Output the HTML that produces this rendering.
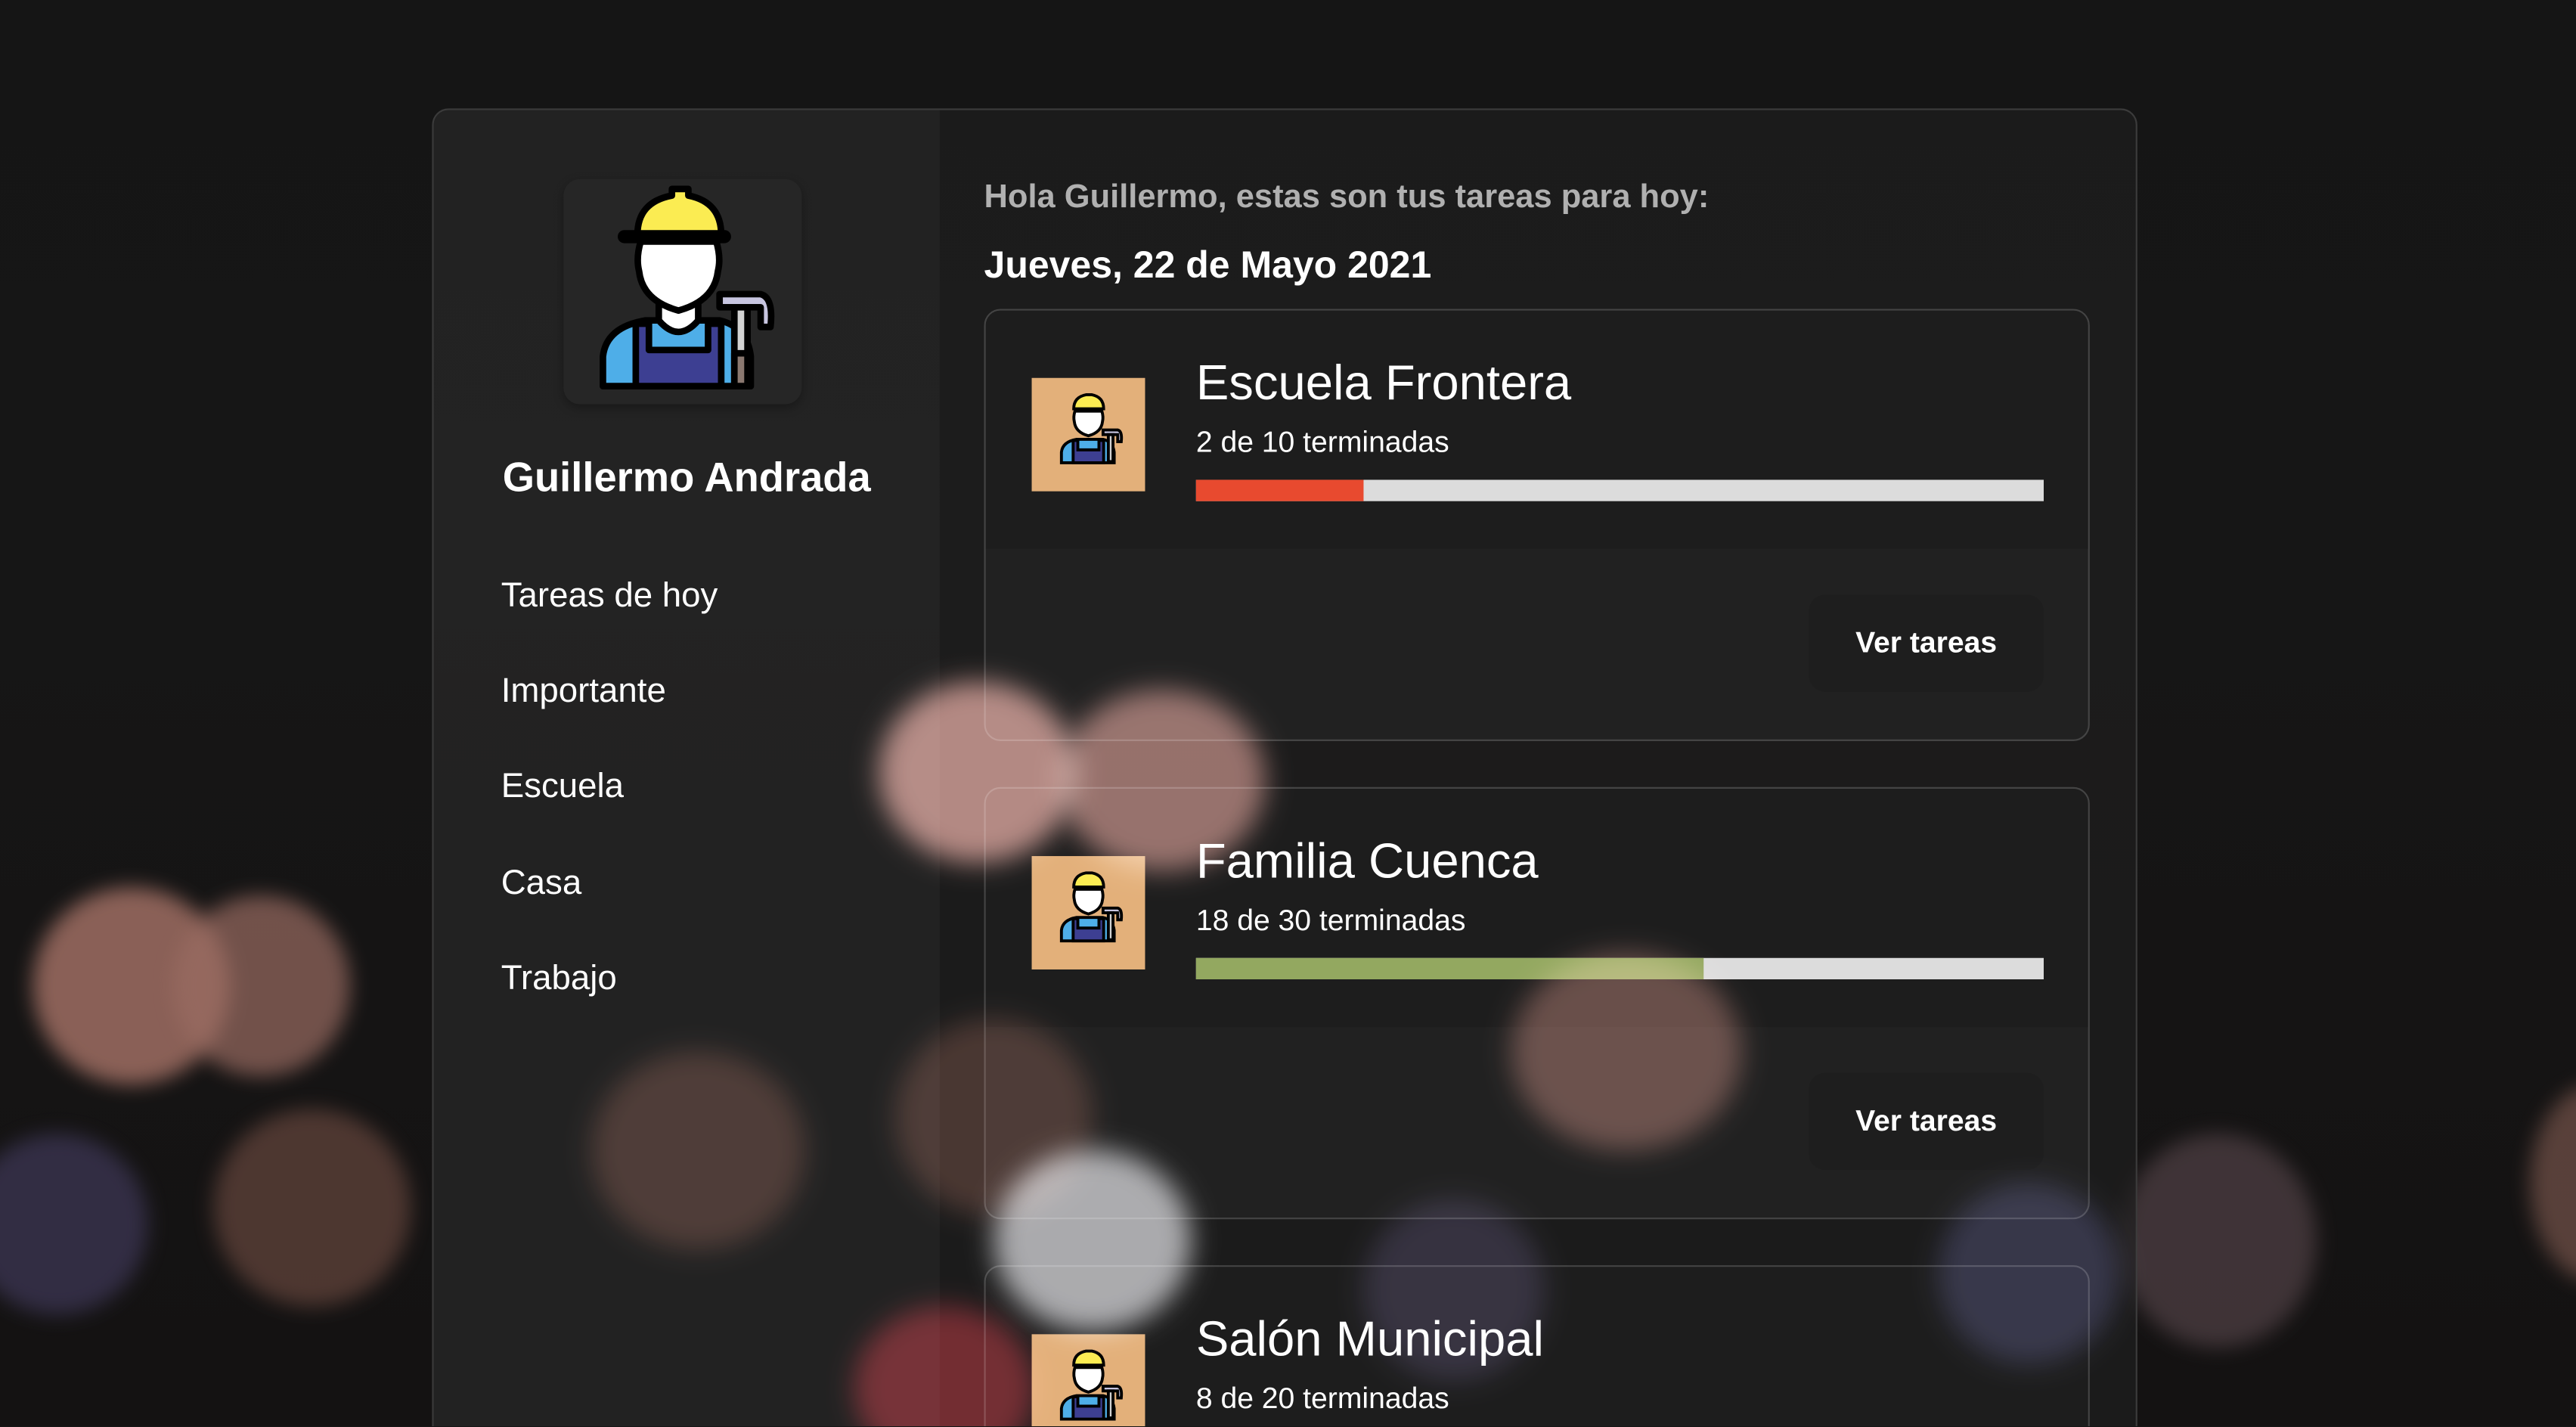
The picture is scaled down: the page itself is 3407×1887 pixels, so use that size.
<!DOCTYPE html>
<html><head><meta charset="utf-8"><style>
html,body{margin:0;padding:0;background:#161616;overflow:hidden;width:3407px;height:1887px;font-family:"Liberation Sans",sans-serif;}
#w{position:absolute;left:0;top:0;width:1568px;height:868px;transform:scale(2.17283);transform-origin:0 0;overflow:hidden;background:linear-gradient(#151515,#161616 40%,#141212);}
.b{position:absolute;border-radius:50%;filter:blur(6px);}
.s{position:absolute;border-radius:50%;filter:blur(8px);mix-blend-mode:screen;pointer-events:none;}
.panel{position:absolute;left:263px;top:66px;width:1036px;height:810px;border:1px solid #3b3b3b;border-radius:10px;overflow:hidden;background:rgba(30,30,30,0.72);}
.side{position:absolute;left:0;top:0;width:308px;height:100%;background:rgba(38,38,38,0.75);}
.av{position:absolute;left:79px;top:42px;width:145px;height:137px;background:#262626;border-radius:10px;box-shadow:0 2px 6px rgba(0,0,0,.3);}
.name{position:absolute;left:0;width:308px;top:210px;text-align:center;color:#fff;font-weight:bold;font-size:25px;}
.nav{position:absolute;left:41px;color:#fff;font-size:21px;}
.t{position:absolute;color:#fff;}
.card{position:absolute;left:335px;width:671px;height:261px;border:1px solid #444;border-radius:10px;overflow:hidden;background:rgba(36,36,36,.72);}
.top{position:absolute;left:0;top:0;width:100%;height:145px;background:rgba(30,30,30,.95);}
.ic{position:absolute;left:28px;top:41px;width:69px;height:69px;background:#e3b07a;}
.ti{position:absolute;left:128px;top:28px;font-size:30px;color:#fff;}
.su{position:absolute;left:128px;top:70px;font-size:18px;color:#fff;}
.bar{position:absolute;left:128px;top:103px;width:516px;height:13px;background:#dcdcdc;}
.bar i{display:block;height:100%;}
.btn{position:absolute;left:501px;top:173px;width:143px;height:59px;background:#1e1e1e;border-radius:10px;color:#fff;font-weight:bold;font-size:18px;text-align:center;line-height:59px;}
</style></head><body><div id="w">
<div class="b" style="left:20px;top:540px;width:120px;height:120px;background:#a87468;opacity:.8"></div>
<div class="b" style="left:105px;top:545px;width:108px;height:110px;background:#9a6c62;opacity:.7"></div>
<div class="b" style="left:-20px;top:690px;width:110px;height:110px;background:#3a3450;opacity:.8"></div>
<div class="b" style="left:130px;top:675px;width:120px;height:120px;background:#5c4038;opacity:.8"></div>
<div class="b" style="left:1290px;top:690px;width:120px;height:130px;background:#4a3c40;opacity:.8"></div>
<div class="b" style="left:1540px;top:660px;width:80px;height:120px;background:#6a4c44;opacity:.8"></div>
<div class="panel">
 <div class="side">
  <div class="av"><svg width="145" height="137" viewBox="0 0 145 137">
   <g stroke="#000" stroke-width="4" stroke-linejoin="round">
    <path d="M24 126 L24 108 Q26 90 50 86 L95 86 Q112 90 114 108 L114 126 Z" fill="#4eaee8"/>
    <path d="M44 88 L44 126 L96 126 L96 88 L88 88 L88 104 L52 104 L52 88 Z" fill="#3d3f92"/>
    <path d="M58 72 L58 86 Q70 100 82 86 L82 72 Z" fill="#fff"/>
    <path d="M47 38 Q44 48 46 56 Q48 74 70 80 Q92 74 94 56 Q96 48 93 38 Z" fill="#fff"/>
    <path d="M45 34 Q45 14 66 10 L66 6 L76 6 L76 10 Q96 14 96 34 Z" fill="#fbec52"/>
    <rect x="35" y="33" width="65" height="4" rx="2" fill="#000"/>
    <path d="M95 70 L120 70 Q128 72 126 90 L120 90 L120 78 L95 78 Z" fill="#c7c5e0"/>
    <rect x="104" y="78" width="8" height="46" fill="#d2d2d2"/>
    <rect x="104" y="106" width="8" height="20" fill="#8a7870"/>
   </g></svg></div>
  <div class="name">Guillermo Andrada</div>
  <div class="nav" style="top:284px">Tareas de hoy</div>
  <div class="nav" style="top:342px">Importante</div>
  <div class="nav" style="top:400px">Escuela</div>
  <div class="nav" style="top:459px">Casa</div>
  <div class="nav" style="top:517px">Trabajo</div>
 </div>
 <div class="t" style="left:335px;top:42px;font-size:20px;font-weight:bold;color:#b0b0b0">Hola Guillermo, estas son tus tareas para hoy:</div>
 <div class="t" style="left:335px;top:81px;font-size:23px;font-weight:bold">Jueves, 22 de Mayo 2021</div>

 <div class="card" style="top:121px"><div class="top"></div>
  <div class="ic"><svg width="69" height="69" viewBox="0 0 145 137"><g transform="translate(20,10) scale(.75)" stroke="#000" stroke-width="5"><path d="M24 126 L24 108 Q26 90 50 86 L95 86 Q112 90 114 108 L114 126 Z" fill="#4eaee8"/><path d="M44 88 L44 126 L96 126 L96 88 L88 88 L88 104 L52 104 L52 88 Z" fill="#3d3f92"/><path d="M47 38 Q44 48 46 56 Q48 74 70 80 Q92 74 94 56 Q96 48 93 38 Z" fill="#fff"/><path d="M45 34 Q45 14 66 10 L76 10 Q96 14 96 34 Z" fill="#fbec52"/><path d="M95 70 L120 70 Q128 72 126 90 L120 90 L120 78 L95 78 Z" fill="#c7c5e0"/><rect x="104" y="78" width="8" height="46" fill="#d2d2d2"/></g></svg></div>
  <div class="ti">Escuela Frontera</div><div class="su">2 de 10 terminadas</div>
  <div class="bar"><i style="width:102px;background:#e84a2f"></i></div>
  <div class="btn">Ver tareas</div></div>

 <div class="card" style="top:412px"><div class="top"></div>
  <div class="ic"><svg width="69" height="69" viewBox="0 0 145 137"><g transform="translate(20,10) scale(.75)" stroke="#000" stroke-width="5"><path d="M24 126 L24 108 Q26 90 50 86 L95 86 Q112 90 114 108 L114 126 Z" fill="#4eaee8"/><path d="M44 88 L44 126 L96 126 L96 88 L88 88 L88 104 L52 104 L52 88 Z" fill="#3d3f92"/><path d="M47 38 Q44 48 46 56 Q48 74 70 80 Q92 74 94 56 Q96 48 93 38 Z" fill="#fff"/><path d="M45 34 Q45 14 66 10 L76 10 Q96 14 96 34 Z" fill="#fbec52"/><path d="M95 70 L120 70 Q128 72 126 90 L120 90 L120 78 L95 78 Z" fill="#c7c5e0"/><rect x="104" y="78" width="8" height="46" fill="#d2d2d2"/></g></svg></div>
  <div class="ti">Familia Cuenca</div><div class="su">18 de 30 terminadas</div>
  <div class="bar"><i style="width:309px;background:#93a860"></i></div>
  <div class="btn">Ver tareas</div></div>

 <div class="card" style="top:703px"><div class="top"></div>
  <div class="ic"><svg width="69" height="69" viewBox="0 0 145 137"><g transform="translate(20,10) scale(.75)" stroke="#000" stroke-width="5"><path d="M24 126 L24 108 Q26 90 50 86 L95 86 Q112 90 114 108 L114 126 Z" fill="#4eaee8"/><path d="M44 88 L44 126 L96 126 L96 88 L88 88 L88 104 L52 104 L52 88 Z" fill="#3d3f92"/><path d="M47 38 Q44 48 46 56 Q48 74 70 80 Q92 74 94 56 Q96 48 93 38 Z" fill="#fff"/><path d="M45 34 Q45 14 66 10 L76 10 Q96 14 96 34 Z" fill="#fbec52"/><path d="M95 70 L120 70 Q128 72 126 90 L120 90 L120 78 L95 78 Z" fill="#c7c5e0"/><rect x="104" y="78" width="8" height="46" fill="#d2d2d2"/></g></svg></div>
  <div class="ti">Salón Municipal</div><div class="su">8 de 20 terminadas</div>
  <div class="bar"><i style="width:206px;background:#e8a02f"></i></div></div>
</div>
<div class="s" style="left:535px;top:415px;width:120px;height:110px;background:#c89088;opacity:.85"></div>
<div class="s" style="left:645px;top:420px;width:125px;height:110px;background:#b88078;opacity:.75"></div>
<div class="s" style="left:920px;top:580px;width:140px;height:120px;background:#7a5048;opacity:.7"></div>
<div class="s" style="left:605px;top:700px;width:120px;height:110px;background:#c8c8cc;opacity:.8"></div>
<div class="s" style="left:520px;top:795px;width:110px;height:100px;background:#7a1820;opacity:.8"></div>
<div class="s" style="left:360px;top:640px;width:130px;height:120px;background:#4a2c24;opacity:.7"></div>
<div class="s" style="left:545px;top:620px;width:120px;height:120px;background:#4a2c24;opacity:.7"></div>
<div class="s" style="left:1180px;top:720px;width:110px;height:110px;background:#2c2c4a;opacity:.7"></div>
<div class="s" style="left:830px;top:730px;width:110px;height:110px;background:#2a243a;opacity:.7"></div>
</div></body></html>
